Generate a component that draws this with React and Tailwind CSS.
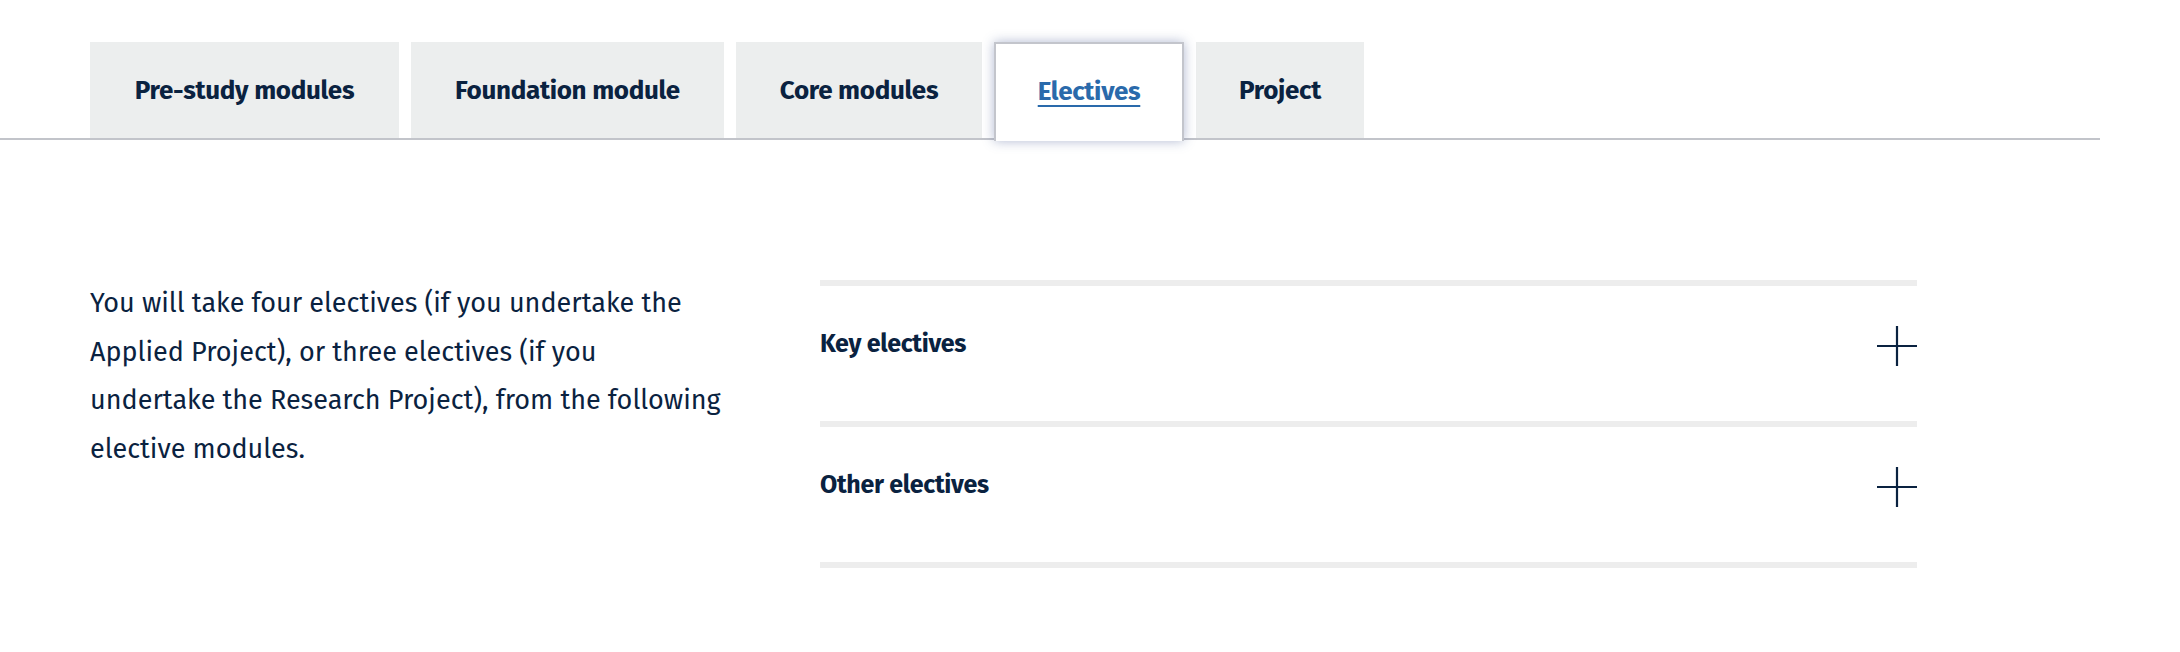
import React from 'react';

const tabs = [
  { name: 'Pre-study modules', width: 'w-[309px]' },
  { name: 'Foundation module', width: 'w-[313px]' },
  { name: 'Core modules', width: 'w-[246px]' },
  { name: 'Electives', width: 'w-[190px]', active: true },
  { name: 'Project', width: 'w-[168px]' },
];

const PlusIcon = () => (
  <svg width="40" height="40" viewBox="0 0 40 40" className="shrink-0">
    <path d="M0 20H40M20 0V40" stroke="#0a2240" strokeWidth="2.2" fill="none" />
  </svg>
);

const AccordionRow = ({ title }) => (
  <div className="border-t-[6px] border-[#ededed]">
    <button className="w-full h-[135px] flex items-center justify-between pt-[40px] pb-[55px] text-left">
      <span className="mb-[5px] text-[25px] leading-[30px] font-bold tracking-[-0.3px] text-[#0a2240]">{title}</span>
      <PlusIcon />
    </button>
  </div>
);

export default function App() {
  return (
    <div className="w-full h-[652px] bg-white text-[#0a2240] font-['Fira_Sans','Open_Sans',sans-serif]">
      <nav className="w-[2100px] pt-[42px] pl-[90px] flex items-end gap-3 border-b-2 border-[#c2c4ca]">
        {tabs.map((tab) =>
          tab.active ? (
            <div
              key={tab.name}
              className={`${tab.width} h-[99px] -mb-[3px] relative z-10 flex items-center justify-center bg-white border-2 border-b-0 border-[#c3c5cc] shadow-[0_0_11px_rgba(60,80,140,0.4)]`}
            >
              <a href="#" className="text-[26px] font-bold tracking-[-0.3px] text-[#2a6aab] underline decoration-2 underline-offset-[5px] pb-[3px]">
                {tab.name}
              </a>
            </div>
          ) : (
            <div
              key={tab.name}
              className={`${tab.width} h-[96px] flex items-center justify-center bg-[#eceeee] text-[26px] font-bold tracking-[-0.3px]`}
            >
              {tab.name}
            </div>
          )
        )}
      </nav>

      <div className="flex pl-[90px] pt-[140px]">
        <div className="w-[730px]">
          <p className="text-[27px] leading-[48.5px] -mt-[1px]">
            You will take four electives (if you undertake the
            <br />
            Applied Project), or three electives (if you
            <br />
            undertake the Research Project), from the following
            <br />
            elective modules.
          </p>
        </div>
        <div className="w-[1097px] border-b-[6px] border-[#ededed]">
          <AccordionRow title="Key electives" />
          <AccordionRow title="Other electives" />
        </div>
      </div>
    </div>
  );
}
